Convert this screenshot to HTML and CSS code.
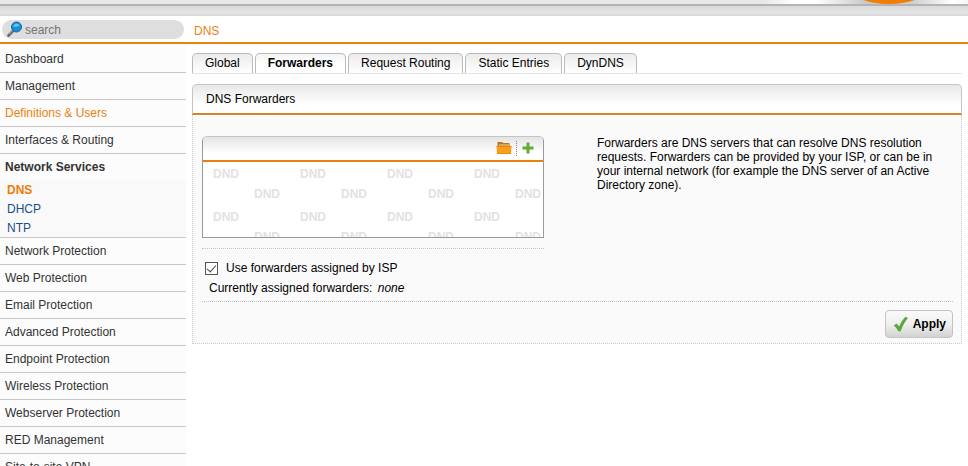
FILE: index.html
```html
<!DOCTYPE html>
<html lang="en">

<head>
    <meta charset="UTF-8">
    <meta name="viewport" content="width=device-width, initial-scale=1.0">
    <title>DNS</title>
    <link rel="stylesheet" href="styles.css">
</head>

<body>

    <header class="banner">
        <svg class="banner-logo" width="300" height="4" viewBox="0 0 300 4">
            <defs>
                <linearGradient id="shade">
                    <stop offset="0" stop-color="#e8e8e8"/>
                    <stop offset="0.32" stop-color="#e8e8e8"/>
                    <stop offset="0.42" stop-color="#fff"/>
                    <stop offset="0.5" stop-color="#fdfdfd"/>
                    <stop offset="0.66" stop-color="#c8c8c8"/>
                    <stop offset="0.82" stop-color="#d0d0d0"/>
                    <stop offset="0.95" stop-color="#fff"/>
                    <stop offset="1" stop-color="#f6f6f6"/>
                </linearGradient>
            </defs>
            <rect width="300" height="4" fill="url(#shade)"/>
            <ellipse cx="221" cy="-12" rx="39" ry="16" fill="#f07d05"/>
        </svg>
    </header>
    <div class="banner-edge"></div>

    <div class="topbar">
        <label class="search">
            <svg width="16" height="16" viewBox="0 0 16 16">
                <path d="M1.5 14.5 L6.5 9.5" stroke="#5d6166" stroke-width="2.6" stroke-linecap="round"/>
                <path d="M2 13.4 L5.8 9.6" stroke="#b5babd" stroke-width="1"/>
                <circle cx="9.5" cy="6" r="5" fill="#1a8fd6" stroke="#1566a5"/>
                <path d="M6.2 5.4 A3.6 3.6 0 0 1 12.6 4.2 Q9.5 6.6 6.2 5.4Z" fill="#6cc3f2"/>
            </svg>
            <input type="text" placeholder="search" aria-label="search">
        </label>
        <span class="crumb">DNS</span>
    </div>

    <div class="page">
        <nav class="menu">
            <a href="#">Dashboard</a>
            <a href="#">Management</a>
            <a href="#" class="hover">Definitions &amp; Users</a>
            <a href="#">Interfaces &amp; Routing</a>
            <a href="#" class="open">Network Services</a>
            <div class="submenu">
                <a href="#" class="current">DNS</a>
                <a href="#">DHCP</a>
                <a href="#">NTP</a>
            </div>
            <a href="#">Network Protection</a>
            <a href="#">Web Protection</a>
            <a href="#">Email Protection</a>
            <a href="#">Advanced Protection</a>
            <a href="#">Endpoint Protection</a>
            <a href="#">Wireless Protection</a>
            <a href="#">Webserver Protection</a>
            <a href="#">RED Management</a>
            <a href="#">Site-to-site VPN</a>
        </nav>

        <main class="content">
            <div class="tabs">
                <button type="button">Global</button>
                <button type="button" class="active">Forwarders</button>
                <button type="button">Request Routing</button>
                <button type="button">Static Entries</button>
                <button type="button">DynDNS</button>
            </div>

            <section class="panel">
                <h2>DNS Forwarders</h2>
                <div class="panel-body">
                    <div class="columns">
                        <div class="settings">
                            <div class="dropbox">
                                <div class="dropbox-head">
                                    <button type="button" class="tool" aria-label="Browse">
                                        <svg width="16" height="14" viewBox="0 0 16 14">
                                            <path d="M1.5 0 H6 L7.5 1 H13.5 V5 H1.5Z" fill="#b9772c"/>
                                            <path d="M3 2 H14 V5 H3Z" fill="#d9a45c"/>
                                            <path d="M0.5 4 H15.5 L15 12 H1Z" fill="#fb9e1b"/>
                                            <path d="M0.5 4 H15.5 V5 H0.5Z M1 11 H15 V12 H1Z" fill="#e88a10"/>
                                        </svg>
                                    </button>
                                    <button type="button" class="tool add" aria-label="Add">
                                        <svg width="12" height="14" viewBox="0 0 12 14">
                                            <path d="M6 0.5 V11.5 M0.5 6 H11.5" stroke="#5fae35" stroke-width="3"/>
                                        </svg>
                                    </button>
                                </div>
                                <div class="dropbox-area">
                                    <div class="dnd"><span>DND</span><span>DND</span><span>DND</span><span>DND</span></div>
                                    <div class="dnd shifted"><span>DND</span><span>DND</span><span>DND</span><span>DND</span></div>
                                    <div class="dnd"><span>DND</span><span>DND</span><span>DND</span><span>DND</span></div>
                                    <div class="dnd shifted"><span>DND</span><span>DND</span><span>DND</span><span>DND</span></div>
                                </div>
                            </div>
                            <div class="option">
                                <input type="checkbox" id="useIsp" checked>
                                <label for="useIsp">Use forwarders assigned by ISP</label>
                            </div>
                            <p class="assigned">Currently assigned forwarders: <em>none</em></p>
                        </div>
                        <p class="help">Forwarders are DNS servers that can resolve DNS resolution requests. Forwarders can be provided by your ISP, or can be in your internal network (for example the DNS server of an Active Directory zone).</p>
                    </div>
                    <div class="actions">
                        <button type="button" class="apply">
                            <svg width="16" height="16" viewBox="0 0 16 16">
                                <path d="M0.8 9.6 L3.6 7.6 L6.2 10.6 C8 6.4 10 3.2 12.4 0.8 L15 2 C11.6 6 9.4 10.4 7.6 15.2 H5.2 C4.2 13 2.6 11.2 0.8 9.6Z" fill="#58a83a"/>
                            </svg>
                            Apply
                        </button>
                    </div>
                </div>
            </section>
        </main>
    </div>

</body>

</html>
```
FILE: styles.css
```css
* {
    box-sizing: border-box;
}

body {
    margin: 0;
    font-family: "Liberation Sans", Arial, sans-serif;
    font-size: 12px;
    color: #000;
    background-color: #fff;
    overflow: hidden;
    height: 100vh;
}

button, input {
    font: inherit;
    color: inherit;
    margin: 0;
}

a {
    text-decoration: none;
}

.banner {
    display: flex;
    justify-content: flex-end;
    height: 4px;
    background-color: #e8e8e8;
}

.banner-edge {
    height: 12px;
    border-top: 2px solid #b4b4b4;
    background: linear-gradient(#dadada, #e4e4e4 70%, #d8d8d8);
}

.topbar {
    display: flex;
    align-items: center;
    height: 28px;
    padding-left: 2px;
    border-bottom: 2px solid #e8820f;
}

.search {
    display: flex;
    align-items: center;
    gap: 2px;
    width: 182px;
    height: 19px;
    padding-left: 5px;
    border-radius: 10px;
    background-color: #dedede;
}

.search input {
    flex: 1;
    min-width: 0;
    padding: 2px 0 0;
    border: 0;
    outline: none;
    background: none;
}

.search input::placeholder {
    color: #757575;
}

.crumb {
    margin-left: 10px;
    padding-top: 3px;
    color: #e8820f;
}

.page {
    display: flex;
    gap: 6px;
    padding-right: 6px;
}

.menu {
    flex: 0 0 186px;
    padding-top: 2px;
    background-color: #fcfcfc;
}

.menu a {
    display: block;
    height: 27px;
    padding-left: 5px;
    line-height: 26px;
    color: #333;
    border-bottom: 1px solid #c8c8c8;
}

.menu .hover {
    color: #e8820f;
}

.menu .open {
    height: 26px;
    font-weight: bold;
    border-bottom: 0;
}

.submenu {
    background-color: #f9f9f9;
    border-bottom: 1px solid #c8c8c8;
}

.submenu a {
    height: 19px;
    padding-left: 7px;
    line-height: 21px;
    color: #17508c;
    border-bottom: 0;
}

.submenu .current {
    color: #f07d05;
    font-weight: bold;
}

.content {
    flex: 1;
    min-width: 0;
    padding-top: 9px;
}

.tabs {
    display: flex;
    gap: 2px;
    height: 21px;
    border-bottom: 1px solid #e4e4e4;
}

.tabs button {
    padding: 0 12px 2px;
    border: 1px solid #bbb;
    border-bottom: 0;
    border-radius: 5px 5px 0 0;
    background: linear-gradient(#ececec, #fff);
}

.tabs .active {
    font-weight: bold;
    background: linear-gradient(#f4f4f4, #fff 50%);
}

.panel {
    margin-top: 10px;
}

.panel h2 {
    margin: 0;
    height: 31px;
    padding-left: 13px;
    font-size: 12px;
    font-weight: normal;
    line-height: 28px;
    border: 1px solid #c4c4c4;
    border-bottom: 2px solid #d0862a;
    border-radius: 5px 5px 0 0;
    background: linear-gradient(#e8e8e8, #fff 70%);
}

.panel-body {
    padding: 21px 8px 5px 9px;
    border: 1px dotted #ccc;
    border-top: 0;
    background-color: #fafafa;
}

.columns {
    display: flex;
    gap: 53px;
    padding-bottom: 6px;
    border-bottom: 1px dotted #c4c4c4;
}

.settings {
    flex: 0 0 342px;
    min-width: 0;
}

.dropbox {
    height: 102px;
    border: 1px solid #999;
    border-top-color: #c4c4c4;
    border-radius: 5px 5px 0 0;
    background-color: #fff;
    overflow: hidden;
}

.dropbox-head {
    display: flex;
    align-items: center;
    justify-content: flex-end;
    height: 25px;
    padding-right: 9px;
    border-bottom: 2px solid #e8820f;
    background: linear-gradient(#e4e4e4, #fff 70%);
}

.tool {
    display: flex;
    align-items: center;
    height: 15px;
    padding: 0;
    border: 0;
    background: none;
}

.add {
    margin-left: 4px;
    padding-left: 5px;
    border-left: 1px dotted #888;
}

.dropbox-area {
    padding-top: 2px;
}

.dnd {
    display: flex;
    height: 20px;
    padding-left: 10px;
    font-weight: bold;
    line-height: 20px;
    color: #e2e2e2;
}

.dnd span {
    flex: 0 0 87px;
}

.shifted {
    height: 23px;
    padding-left: 51px;
}

.option {
    display: flex;
    align-items: center;
    gap: 8px;
    margin-top: 10px;
    padding: 12px 0 0 3px;
    border-top: 1px dotted #c4c4c4;
}

.option input {
    display: flex;
    justify-content: center;
    width: 13px;
    height: 13px;
    border: 1px solid #555;
    background-color: #fff;
    appearance: none;
}

.option input:checked::after {
    content: "";
    width: 4px;
    height: 8px;
    border: solid #444;
    border-width: 0 1px 1px 0;
    transform: rotate(42deg);
}

.assigned {
    margin: 6px 0 0 7px;
    line-height: 14px;
}

.assigned em {
    margin-left: 2px;
}

.help {
    flex: 1;
    max-width: 345px;
    margin: 0;
    line-height: 14px;
}

.actions {
    display: flex;
    justify-content: flex-end;
    padding-top: 8px;
}

.apply {
    display: flex;
    align-items: center;
    gap: 4px;
    height: 28px;
    padding: 0 6px 0 7px;
    font-weight: bold;
    border: 1px solid #c4c4c4;
    border-radius: 4px;
    background: linear-gradient(#fafafa, #f0f0f0 50%, #d2d2d2);
}
```
